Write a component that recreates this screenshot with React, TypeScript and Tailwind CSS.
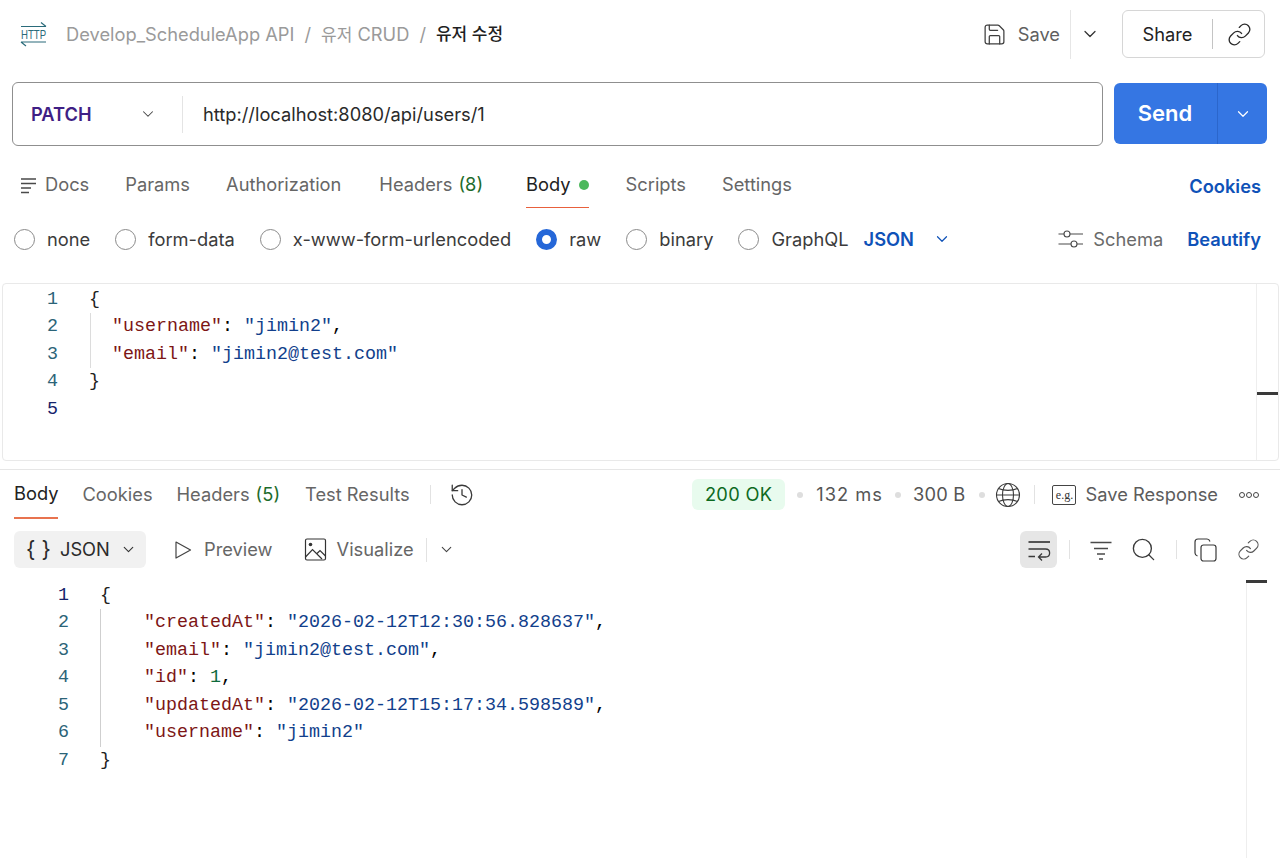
import React from "react";
import { ChevronDown, History, Link, Save, Search } from "lucide-react";

const UI = "font-['Inter','Noto_Sans_CJK_KR',sans-serif]";

function HttpLogo() {
  return (
    <svg width="28" height="28" viewBox="0 0 28 28" fill="none" className="shrink-0">
      <path d="M1 6.5H26M21 2.5L26 6.5" stroke="#2a6b7a" strokeWidth="1.2" />
      <path d="M1 22H26M6 26L1 22" stroke="#2a6b7a" strokeWidth="1.2" />
      <text transform="translate(13.5 19) scale(0.74 1)" textAnchor="middle" fontFamily="Liberation Sans" fontSize="13" fill="#2a6b7a">HTTP</text>
    </svg>
  );
}

function Radio({ label, on, className }: { label: string; on?: boolean; className?: string }) {
  return (
    <div className={`flex items-center gap-[12px] ${className ?? ""}`}>
      {on ? (
        <span className="w-[21px] h-[21px] rounded-full border-[6px] border-[#2567d8] bg-white" />
      ) : (
        <span className="w-[21px] h-[21px] rounded-full border border-[#8a8a8a] bg-white" />
      )}
      <span className="pt-[1px] text-[#3b3b3b]">{label}</span>
    </div>
  );
}

function Key({ children }: { children: React.ReactNode }) {
  return <span className="text-[#7d1616]">{children}</span>;
}
function Str({ children }: { children: React.ReactNode }) {
  return <span className="text-[#123f8c]">{children}</span>;
}

function Nums({ n, active, className }: { n: number; active: number; className?: string }) {
  return (
    <div className={`text-right shrink-0 ${className ?? ""}`}>
      {Array.from({ length: n }, (_, i) => (
        <div key={i} className={i + 1 === active ? "text-[#15236b]" : "text-[#2b6478]"}>
          {i + 1}
        </div>
      ))}
    </div>
  );
}

function WrapIcon() {
  return (
    <svg width="24" height="24" viewBox="0 0 24 24" fill="none" stroke="#3a3a3a" strokeWidth="1.3">
      <path d="M1.5 4H23" strokeWidth="1.7" />
      <path d="M1.5 11H18.5C24 11 24 19 18.5 19H12M15 15.5L11.5 19L15 22.5M1.5 18.5H8" />
    </svg>
  );
}
function FilterIcon() {
  return (
    <svg width="22" height="22" viewBox="0 0 22 22" fill="none" stroke="#4a4a4a" strokeWidth="1.3">
      <path d="M0.5 3.5H21.5M4 9.5H18M7 15H15M9 20H13" />
    </svg>
  );
}
function DocsIcon() {
  return (
    <svg width="18" height="18" viewBox="0 0 18 18" fill="none" stroke="#4a4a4a" strokeWidth="1.3" className="shrink-0">
      <path d="M1 3H16M1 7.5H16M1 12H11M1 16.5H9" />
    </svg>
  );
}
function SchemaIcon() {
  return (
    <svg width="26" height="20" viewBox="0 0 26 20" fill="none" stroke="#4a4a4a" strokeWidth="1.1" className="shrink-0">
      <circle cx="9" cy="5" r="3" />
      <circle cx="16" cy="15" r="3" />
      <path d="M0.5 5H6M12 5H25M0.5 15H13M19 15H25" />
    </svg>
  );
}
function GlobeIcon() {
  return (
    <svg width="26" height="26" viewBox="0 0 26 26" fill="none" stroke="#3a3a3a" strokeWidth="1.1" className="ml-[10px] shrink-0">
      <circle cx="13" cy="13" r="11.5" />
      <ellipse cx="13" cy="13" rx="5.5" ry="11.5" />
      <path d="M3.5 6.5C9 9 17 9 22.5 6.5M3.5 19.5C9 17 17 17 22.5 19.5M1.5 13H24.5" />
    </svg>
  );
}
function CopyIcon() {
  return (
    <svg width="23" height="24" viewBox="0 0 23 24" fill="none" stroke="#3a3a3a" strokeWidth="1.2" className="ml-[17px] shrink-0">
      <rect x="7" y="7" width="15" height="16" rx="2.5" />
      <path d="M3.5 18C2 17.5 1 16.5 1 15V4C1 2.3 2.3 1 4 1H13C14.5 1 15.5 2 16 3.5" />
    </svg>
  );
}
function PlayIcon() {
  return (
    <svg width="18" height="20" viewBox="0 0 18 20" fill="none" stroke="#444" strokeWidth="1.2" className="ml-[28px] shrink-0">
      <path d="M2 2L16.5 10L2 18Z" strokeLinejoin="round" />
    </svg>
  );
}
function ImageIcon() {
  return (
    <svg width="23" height="23" viewBox="0 0 23 23" fill="none" stroke="#333" strokeWidth="1.2" className="ml-[31px] shrink-0">
      <rect x="1.5" y="1" width="20" height="21" rx="1.5" />
      <circle cx="6.5" cy="6.5" r="1.8" fill="#333" stroke="none" />
      <path d="M1.5 19L8.5 11.5L18 21M13 15.5L16 12.5L21.5 18" />
    </svg>
  );
}

export default function App() {
  return (
    <div className={`w-[1280px] h-[858px] overflow-hidden bg-white flex flex-col text-[18.3px] ${UI}`}>
      {/* header */}
      <div className="h-[68px] flex items-center pl-[20px] pr-[15px] shrink-0">
        <HttpLogo />
        <div className="ml-[18px] pt-[1px] flex items-center gap-[10px] text-[#9a9a9a]">
          <span>Develop_ScheduleApp API</span>
          <span>/</span>
          <span><span className="text-[17px]">유저</span> CRUD</span>
          <span>/</span>
          <span className="text-[#1f1f1f] text-[17px] font-medium">유저 수정</span>
        </div>
        <div className="ml-auto flex items-center">
          <Save size={25} strokeWidth={1.2} color="#3f3f3f" />
          <span className="ml-[11px] pt-[1px] text-[#5f5f5f]">Save</span>
          <div className="ml-[10px] w-px h-[49px] bg-[#e6e6e6]" />
          <ChevronDown size={20} strokeWidth={1.5} color="#333" className="ml-[9px]" />
          <div className="ml-[22px] w-[143px] h-[48px] rounded-[6px] border border-[#d6d6d6] flex items-center">
            <span className="w-[89px] pt-[1px] text-center text-[#222]">Share</span>
            <div className="w-px h-[30px] bg-[#c4c4c4]" />
            <div className="flex-1 flex justify-center pl-[2px]">
              <Link size={25} strokeWidth={1.3} color="#2b2b2b" />
            </div>
          </div>
        </div>
      </div>

      {/* url row */}
      <div className="h-[64px] mt-[14px] pl-[12px] pr-[13px] flex gap-[11px] shrink-0">
        <div className="flex-1 rounded-[6px] border border-[#8f8f8f] flex items-center">
          <span className="ml-[18px] pt-[1px] w-[108px] font-semibold text-[#3f1f85]">PATCH</span>
          <ChevronDown size={18} strokeWidth={1.4} color="#444" />
          <div className="ml-[25px] w-px h-[37px] bg-[#e4e4e4]" />
          <span className="ml-[20px] pt-[1px] text-[#2a2a2a]">http://localhost:8080/api/users/1</span>
        </div>
        <div className="w-[153px] h-[61px] mt-[1px] rounded-[6px] bg-[#3576e3] flex items-center text-white">
          <span className="w-[103px] pr-[1px] text-center text-[22px] font-semibold">Send</span>
          <div className="w-px h-full bg-[#2b66cc]" />
          <div className="flex-1 flex justify-center">
            <ChevronDown size={18} strokeWidth={1.6} color="#fff" />
          </div>
        </div>
      </div>

      {/* request tabs */}
      <div className="h-[43px] mt-[19px] flex items-start pl-[20px] pr-[19px] shrink-0 text-[#666]">
        <div className="h-full flex items-center gap-[7px] pb-[3px]">
          <DocsIcon />
          <span>Docs</span>
        </div>
        <div className="h-full flex items-center pb-[3px] ml-[36px]">Params</div>
        <div className="h-full flex items-center pb-[3px] ml-[36px]">Authorization</div>
        <div className="h-full flex items-center pb-[3px] ml-[38px]">
          Headers<span className="ml-[6px] text-[#1d6b2b]">(8)</span>
        </div>
        <div className="h-full flex items-center pb-[2px] ml-[43px] border-b border-[#e8603c] text-[#222] gap-[8px]">
          Body
          <span className="w-[10px] h-[10px] rounded-full bg-[#4cb85c]" />
        </div>
        <div className="h-full flex items-center pb-[3px] ml-[37px]">Scripts</div>
        <div className="h-full flex items-center pb-[3px] ml-[36px]">Settings</div>
        <div className="ml-auto h-full flex items-center pt-[1px] font-semibold text-[#0f52b8]">Cookies</div>
      </div>

      {/* body type row */}
      <div className="h-[40px] mt-[11px] flex items-center pl-[14px] pr-[19px] shrink-0">
        <Radio label="none" />
        <Radio label="form-data" className="ml-[25px]" />
        <Radio label="x-www-form-urlencoded" className="ml-[25px]" />
        <Radio label="raw" on className="ml-[25px]" />
        <Radio label="binary" className="ml-[25px]" />
        <Radio label="GraphQL" className="ml-[25px]" />
        <span className="ml-[15px] pt-[1px] font-semibold text-[#0f52b8]">JSON</span>
        <ChevronDown size={18} strokeWidth={1.6} color="#0f52b8" className="ml-[19px]" />
        <div className="ml-auto flex items-center text-[#6a6a6a]">
          <SchemaIcon />
          <span className="ml-[9px] pt-[1px]">Schema</span>
          <span className="ml-[24px] pt-[1px] font-semibold text-[#0f52b8]">Beautify</span>
        </div>
      </div>

      {/* request editor */}
      <div className="relative h-[178px] mt-[24px] ml-[2px] mr-[1px] rounded-[4px] border border-[#e9e9e9] flex shrink-0 font-['Liberation_Mono',monospace] text-[18.33px] leading-[27.5px]">
        <div className="flex flex-1 pt-[1.5px]">
          <Nums n={5} active={5} className="w-[55px]" />
          <div className="ml-[31px] relative">
            <div className="text-[#222]">{"{"}</div>
            <div className="pl-[21px] border-l border-[#dcdcdc] ml-[1px]">
              <div>
                <Key>"username"</Key>: <Str>"jimin2"</Str>,
              </div>
              <div>
                <Key>"email"</Key>: <Str>"jimin2@test.com"</Str>
              </div>
            </div>
            <div className="text-[#222]">{"}"}</div>
          </div>
        </div>
        <div className="w-[22px] border-l border-[#eeeeee] shrink-0" />
        <div className="absolute right-0 top-[108px] w-[21px] h-[3px] bg-[#3a3a3a]" />
      </div>

      <div className="h-px mt-[8px] bg-[#e6e6e6] shrink-0" />

      {/* response tabs */}
      <div className="h-[49px] flex pl-[14px] pr-[21px] text-[#666] shrink-0">
        <div className="h-full flex items-center pt-[1px] border-b-2 border-[#e8734f] text-[#222]">Body</div>
        <div className="h-full flex items-center ml-[24px]">Cookies</div>
        <div className="h-full flex items-center ml-[24px]">
          Headers<span className="ml-[6px] text-[#1d6b2b]">(5)</span>
        </div>
        <div className="h-full flex items-center ml-[25px]">Test Results</div>
        <div className="self-center ml-[20px] w-px h-[19px] bg-[#e2e2e2]" />
        <History size={26} strokeWidth={1.2} color="#3a3a3a" className="self-center ml-[18px]" />
        <div className="ml-auto flex items-center">
          <span className="h-[31px] px-[13px] rounded-[6px] bg-[#e8fbee] text-[#0d6a1e] tracking-[0.3px] flex items-center">200 OK</span>
          <span className="ml-[12px] w-[6px] h-[6px] rounded-full bg-[#dedede]" />
          <span className="ml-[13px] text-[#555] tracking-[1px]">132 ms</span>
          <span className="ml-[12px] w-[6px] h-[6px] rounded-full bg-[#dedede]" />
          <span className="ml-[12px] text-[#555] tracking-[0.2px]">300 B</span>
          <span className="ml-[14px] w-[6px] h-[6px] rounded-full bg-[#dedede]" />
          <GlobeIcon />
          <div className="ml-[13px] w-px h-[19px] bg-[#e2e2e2]" />
          <div className="ml-[17px] w-[24px] h-[20px] rounded-[2px] border border-[#444] flex items-center justify-center text-[12px] leading-none font-['Liberation_Serif',serif] text-[#333]">
            e.g.
          </div>
          <span className="ml-[9px] text-[#5c5c5c]">Save Response</span>
          <div className="ml-[21px] flex gap-[1px]">
            <span className="w-[6px] h-[6px] rounded-full border border-[#444]" />
            <span className="w-[6px] h-[6px] rounded-full border border-[#444]" />
            <span className="w-[6px] h-[6px] rounded-full border border-[#444]" />
          </div>
        </div>
      </div>

      {/* response toolbar */}
      <div className="h-[37px] mt-[12px] flex items-center pl-[14px] pr-[20px] shrink-0 text-[#666]">
        <div className="h-full w-[132px] rounded-[6px] bg-[#f1f1f1] flex items-center pl-[12px] text-[#2b2b2b]">
          <span className="text-[22px]">{"{ }"}</span>
          <span className="ml-[9px]">JSON</span>
          <ChevronDown size={17} strokeWidth={1.6} color="#333" className="ml-[10px]" />
        </div>
        <PlayIcon />
        <span className="ml-[12px]">Preview</span>
        <ImageIcon />
        <span className="ml-[10px]">Visualize</span>
        <div className="ml-[12px] w-px h-[24px] bg-[#e2e2e2]" />
        <ChevronDown size={17} strokeWidth={1.5} color="#444" className="ml-[11px]" />
        <div className="ml-auto flex items-center">
          <div className="w-[37px] h-[37px] rounded-[6px] bg-[#e6e6e6] flex items-center justify-center">
            <WrapIcon />
          </div>
          <div className="ml-[12px] w-px h-[19px] bg-[#e2e2e2]" />
          <div className="ml-[20px]"><FilterIcon /></div>
          <Search size={27} strokeWidth={1.2} color="#3a3a3a" className="ml-[18px]" />
          <div className="ml-[19px] w-px h-[19px] bg-[#e2e2e2]" />
          <CopyIcon />
          <Link size={23} strokeWidth={1.2} color="#555" className="ml-[20px]" />
        </div>
      </div>

      {/* response editor */}
      <div className="relative flex-1 mt-[12px] flex font-['Liberation_Mono',monospace] text-[18.33px] leading-[27.5px]">
        <div className="flex flex-1 pt-[1.5px]">
          <Nums n={7} active={1} className="w-[69px]" />
          <div className="ml-[31px]">
            <div className="text-[#222]">{"{"}</div>
            <div className="pl-[43px] border-l border-[#cfcfcf]">
              <div><Key>"createdAt"</Key>: <Str>"2026-02-12T12:30:56.828637"</Str>,</div>
              <div><Key>"email"</Key>: <Str>"jimin2@test.com"</Str>,</div>
              <div><Key>"id"</Key>: <span className="text-[#0f6b3c]">1</span>,</div>
              <div><Key>"updatedAt"</Key>: <Str>"2026-02-12T15:17:34.598589"</Str>,</div>
              <div><Key>"username"</Key>: <Str>"jimin2"</Str></div>
            </div>
            <div className="text-[#222]">{"}"}</div>
          </div>
        </div>
        <div className="w-[34px] border-l border-[#eeeeee] shrink-0" />
        <div className="absolute right-[13px] top-0 w-[21px] h-[3px] bg-[#3a3a3a]" />
      </div>
    </div>
  );
}
